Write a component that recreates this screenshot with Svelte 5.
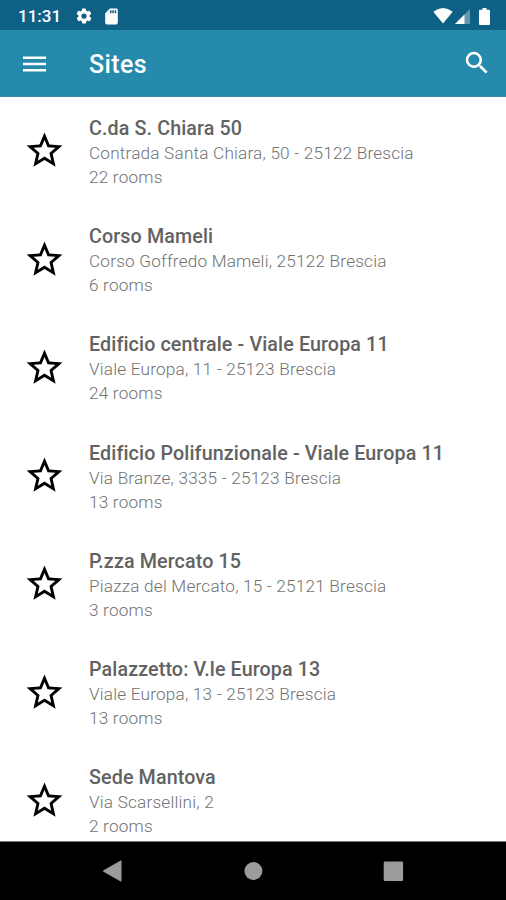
<script lang="ts">
	let sites = [
		{ name: "C.da S. Chiara 50", address: "Contrada Santa Chiara, 50 - 25122 Brescia", rooms: 22 },
		{ name: "Corso Mameli", address: "Corso Goffredo Mameli, 25122 Brescia", rooms: 6 },
		{ name: "Edificio centrale - Viale Europa 11", address: "Viale Europa, 11 - 25123 Brescia", rooms: 24 },
		{ name: "Edificio Polifunzionale - Viale Europa 11", address: "Via Branze, 3335 - 25123 Brescia", rooms: 13 },
		{ name: "P.zza Mercato 15", address: "Piazza del Mercato, 15 - 25121 Brescia", rooms: 3 },
		{ name: "Palazzetto: V.le Europa 13", address: "Viale Europa, 13 - 25123 Brescia", rooms: 13 },
		{ name: "Sede Mantova", address: "Via Scarsellini, 2", rooms: 2 },
	];
</script>

<div class="screen">
	<div class="status">
		<span class="clock">11:31</span>
		<svg class="gear" viewBox="0 0 24 24">
			<path d="M19.4 13c.1-.3.1-.7.1-1s0-.7-.1-1l2.1-1.6c.2-.2.2-.4.1-.6l-2-3.5c-.1-.2-.4-.3-.6-.2l-2.5 1c-.5-.4-1.1-.7-1.7-1l-.4-2.6c0-.2-.2-.5-.5-.5h-4c-.3 0-.5.2-.5.4l-.4 2.7c-.6.2-1.2.6-1.7 1l-2.5-1c-.2-.1-.5 0-.6.2l-2 3.5c-.1.2-.1.5.1.6L4.6 11c-.1.3-.1.7-.1 1s0 .7.1 1l-2.1 1.6c-.2.2-.2.4-.1.6l2 3.5c.1.2.4.3.6.2l2.5-1c.5.4 1.1.7 1.7 1l.4 2.6c0 .3.2.5.5.5h4c.2 0 .5-.2.5-.4l.4-2.7c.6-.2 1.2-.6 1.7-1l2.5 1c.2.1.5 0 .6-.2l2-3.5c.1-.2.1-.5-.1-.6zM12 15.5a3.5 3.5 0 1 1 0-7 3.5 3.5 0 0 1 0 7z" />
		</svg>
		<svg class="card" viewBox="0 0 24 24">
			<path d="M18 2h-8L4 8v12c0 1.1.9 2 2 2h12c1.1 0 2-.9 2-2V4c0-1.1-.9-2-2-2zm-6 6h-2V4h2zm3 0h-2V4h2zm3 0h-2V4h2z" />
		</svg>
		<div class="signals">
			<svg width="20" height="16" viewBox="0 0 20 16">
				<path d="M.3 3.7Q10-3.5 19.7 3.7L10 15.5z" />
			</svg>
			<svg width="15" height="15" viewBox="0 0 15 15">
				<path d="M15 0v15H0z" opacity=".35" />
				<path d="M9.5 5.5V15H0z" />
			</svg>
			<svg class="battery" width="11" height="17" viewBox="0 0 11 17">
				<path d="M3.5 0h4v1.7H10q1 0 1 1V16q0 1-1 1H1q-1 0-1-1V2.7q0-1 1-1h2.5z" />
			</svg>
		</div>
	</div>

	<header>
		<svg width="23" height="16" viewBox="0 0 23 16">
			<path d="M0 .5h23v2.5H0zM0 6.8h23v2.5H0zM0 13h23v2.5H0z" />
		</svg>
		<h1>Sites</h1>
		<svg class="search" viewBox="0 0 24 24">
			<path d="M15.5 14h-.79l-.28-.27A6.47 6.47 0 0 0 16 9.5 6.5 6.5 0 1 0 9.5 16c1.61 0 3.09-.59 4.23-1.57l.27.28v.79l5 4.99L20.49 19zm-6 0a4.5 4.5 0 1 1 0-9 4.5 4.5 0 0 1 0 9z" />
		</svg>
	</header>

	<ul>
		{#each sites as site}
			<li>
				<svg class="star" viewBox="0 0 24 24">
					<path d="M22 9.24l-7.19-.62L12 2 9.19 8.63 2 9.24l5.46 4.73L5.82 21 12 17.27 18.18 21l-1.63-7.03zM12 15.4l-3.76 2.27 1-4.28-3.32-2.88 4.38-.38L12 6.1l1.71 4.04 4.38.38-3.32 2.88 1 4.28z" />
				</svg>
				<div class="info">
					<h2>{site.name}</h2>
					<p>{site.address}</p>
					<p>{site.rooms} rooms</p>
				</div>
			</li>
		{/each}
	</ul>

	<nav>
		<svg viewBox="0 0 22 22"><path d="M19.5 1v20q0 .8-.8.4L1.5 11.700q-1-.7 0-1.4L18.700.6q.8-.4.8.4z" /></svg>
		<svg viewBox="0 0 22 22"><circle cx="11.400" cy="11" r="9" /></svg>
		<svg viewBox="0 0 22 22"><rect x="1.700" y="1.500" width="19.400" height="19.400" rx="1.200" /></svg>
	</nav>
</div>

<style>
	:global(body) {
		margin: 0;
	}

	.screen {
		display: flex;
		flex-direction: column;
		width: 506px;
		height: 900px;
		overflow: hidden;
		background: #fff;
		font-family: Roboto, sans-serif;
	}

	svg {
		display: block;
		flex: none;
		fill: currentColor;
	}

	.status {
		display: flex;
		flex: none;
		align-items: center;
		box-sizing: border-box;
		height: 30px;
		padding: 2px 16px 0 18px;
		background: #0f6085;
		color: #fff;
	}
	.clock {
		width: 57px;
		font-size: 17px;
		font-weight: 500;
		line-height: 20px;
	}
	.gear {
		width: 18px;
		height: 18px;
	}
	.card {
		width: 19px;
		height: 19px;
		margin-left: 9px;
	}
	.signals {
		display: flex;
		align-items: center;
		margin-left: auto;
	}
	.signals svg + svg {
		margin-left: 2px;
	}
	.signals .battery {
		margin-left: 9px;
	}

	header {
		display: flex;
		flex: none;
		align-items: center;
		box-sizing: border-box;
		height: 67px;
		padding: 1px 14px 0 23px;
		background: #268aac;
		border-bottom: 1px solid #3688a4;
		color: #fff;
	}
	h1 {
		flex: 1;
		margin: 2px 0 0 43px;
		font-size: 25px;
		font-weight: 500;
		line-height: 30px;
		letter-spacing: 0.4px;
	}
	.search {
		width: 30px;
		height: 30px;
		margin-top: -1px;
	}

	ul {
		flex: 1;
		min-height: 0;
		margin: 0;
		padding: 0;
		overflow: hidden;
		list-style: none;
	}
	li {
		display: flex;
		box-sizing: border-box;
		height: 108.25px;
		padding: 18.9px 0 0 23px;
	}
	.star {
		width: 43px;
		height: 43px;
		margin-top: 13.4px;
		color: #000;
	}
	.info {
		margin-left: 23px;
		white-space: nowrap;
	}
	h2 {
		margin: 0;
		color: #626262;
		font-size: 19.7px;
		font-weight: 500;
		line-height: 25px;
		letter-spacing: 0.12px;
	}
	p {
		margin: 0;
		color: #717171;
		font-size: 17.2px;
		font-weight: 300;
		line-height: 24px;
		letter-spacing: 0.19px;
	}

	nav {
		display: flex;
		flex: none;
		align-items: center;
		justify-content: center;
		gap: 118px;
		box-sizing: border-box;
		height: 59px;
		border-top: 1px solid #777;
		background: #000;
		color: #9b9b9b;
	}
	nav svg {
		width: 22px;
		height: 22px;
	}
</style>
